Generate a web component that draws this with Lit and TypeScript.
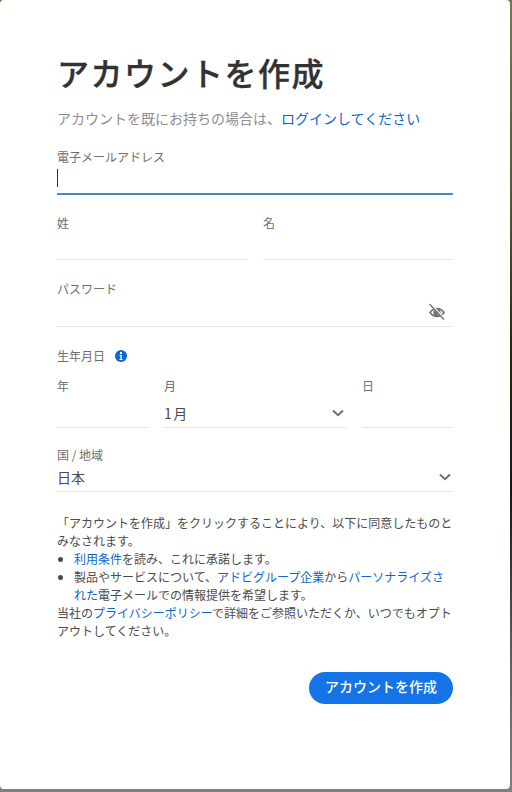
import { LitElement, html, css } from "lit";
import { customElement } from "lit/decorators.js";

const chevron = html`<svg class="chev" width="12" height="8" viewBox="0 0 12 8" fill="none" stroke="#6e6e6e" stroke-width="2"><path d="M1 1.5 6 6.2 11 1.5"/></svg>`;

@customElement("app-root")
export class AppRoot extends LitElement {
  static styles = css`
    :host {
      display: block;
      width: 512px;
      height: 792px;
      overflow: hidden;
      background: linear-gradient(180deg, #77784f 0%, #56553a 25%, #2b2412 45%, #1c150c 62%, #5b5b58 82%, #808080 100%);
      font-family: "Noto Sans CJK JP", "Noto Sans", sans-serif;
    }
    * { box-sizing: border-box; }
    .card {
      width: 510px;
      height: 789px;
      background: #fff;
      border-radius: 4px;
      padding: 51px 57px 0;
    }
    h1 {
      margin: 0;
      font-size: 32px;
      line-height: 42px;
      font-weight: 500;
      letter-spacing: 1.5px;
      color: #323232;
      -webkit-text-stroke: 0.3px #323232;
    }
    .sub {
      margin: 15px 0 0;
      font-size: 14px;
      line-height: 20px;
      color: #8e8e8e;
    }
    a { color: #0d66d0; text-decoration: none; }
    .label {
      display: flex;
      align-items: center;
      font-size: 12px;
      line-height: 16px;
      color: #6e6e6e;
    }
    .field { display: block; }
    .m21 { margin-top: 21px; }
    .m20 { margin-top: 20px; }
    .m19 { margin-top: 19px; }
    .m14 { margin-top: 14px; }
    .input {
      display: flex;
      align-items: center;
      justify-content: space-between;
      border-bottom: 1px solid #e6e6e6;
      font-size: 14px;
      color: #4b4b4b;
    }
    .h30 { height: 30px; }
    .h29 { height: 29px; }
    .h34 { height: 34px; }
    .pt5 { padding-top: 5px; }
    .focus {
      height: 30px;
      border-bottom: 2px solid #4a86c5;
      align-items: flex-start;
      padding-top: 4px;
    }
    .caret { width: 1px; height: 18px; background: #333; }
    .name { display: grid; grid-template-columns: 1fr 1fr; gap: 16px; }
    .date { display: grid; grid-template-columns: 1fr 2fr 1fr; gap: 16px; }
    .name .input { height: 29px; }
    .info { margin-left: 10px; }
    .end { justify-content: flex-end; }
    .eye { margin-right: 7px; }
    .chev { margin-right: 2px; }
    .month { letter-spacing: 1.5px; }
    .legal {
      margin: 22px 0 0;
      font-size: 12px;
      line-height: 18px;
      color: #4b4b4b;
    }
    .legal p { margin: 0; }
    .legal ul { margin: 0; padding: 0 0 0 17px; }
    .actions { display: flex; justify-content: flex-end; margin-top: 32px; }
    button {
      width: 144px;
      height: 32px;
      padding: 0 0 3px;
      border: 0;
      border-radius: 16px;
      background: #1473e6;
      color: #fff;
      font: 500 14px/29px "Noto Sans CJK JP", "Noto Sans", sans-serif;
    }
  `;

  render() {
    return html`
      <main class="card">
        <h1>アカウントを作成</h1>
        <p class="sub">アカウントを既にお持ちの場合は、<a href="#">ログインしてください</a></p>

        <div class="field m21">
          <div class="label">電子メールアドレス</div>
          <div class="input focus"><span class="caret"></span></div>
        </div>

        <div class="name m20">
          <div class="field"><div class="label">姓</div><div class="input"></div></div>
          <div class="field"><div class="label">名</div><div class="input"></div></div>
        </div>

        <div class="field m21">
          <div class="label">パスワード</div>
          <div class="input h30 end">
            <svg class="eye" width="18" height="18" viewBox="0 0 18 18" fill="none">
              <path d="M1 9.500C3 6.400 5.800 4.800 9 4.800s6 1.600 8 4.700c-2 3.100-4.800 4.700-8 4.700s-6-1.600-8-4.700Z" fill="#6e6e6e"/>
              <path d="M3 9.500C4.600 7.700 6.600 6.500 9 6.500s4.400 1.200 6 3c-1.600 1.800-3.600 3-6 3s-4.400-1.200-6-3Z" fill="#fff"/>
              <circle cx="9" cy="9.500" r="3.600" fill="#6e6e6e"/>
              <path d="M2.300 1.200 16.800 16.500" stroke="#fff" stroke-width="2.500"/>
              <path d="M1.500 1 16 16.500" stroke="#6e6e6e" stroke-width="1.300"/>
            </svg>
          </div>
        </div>

        <div class="label m21">
          生年月日
          <svg class="info" width="12" height="12" viewBox="0 0 12 12">
            <circle cx="6" cy="6" r="6" fill="#0d66d0"/>
            <circle cx="6" cy="3" r="1.200" fill="#fff"/>
            <path d="M4.500 5h2.300v4h.9v1H4.400V9h1V6h-.9Z" fill="#fff"/>
          </svg>
        </div>

        <div class="date m14">
          <div class="field"><div class="label">年</div><div class="input h34"></div></div>
          <div class="field"><div class="label">月</div><div class="input h34 pt5"><span class="month">1月</span>${chevron}</div></div>
          <div class="field"><div class="label">日</div><div class="input h34"></div></div>
        </div>

        <div class="field m19">
          <div class="label">国 / 地域</div>
          <div class="input h29"><span>日本</span>${chevron}</div>
        </div>

        <div class="legal">
          <p>「アカウントを作成」をクリックすることにより、以下に同意したものとみなされます。</p>
          <ul>
            <li><a href="#">利用条件</a>を読み、これに承諾します。</li>
            <li>製品やサービスについて、<a href="#">アドビグループ企業</a>から<a href="#">パーソナライズされた</a>電子メールでの情報提供を希望します。</li>
          </ul>
          <p>当社の<a href="#">プライバシーポリシー</a>で詳細をご参照いただくか、いつでもオプトアウトしてください。</p>
        </div>

        <div class="actions"><button>アカウントを作成</button></div>
      </main>
    `;
  }
}
